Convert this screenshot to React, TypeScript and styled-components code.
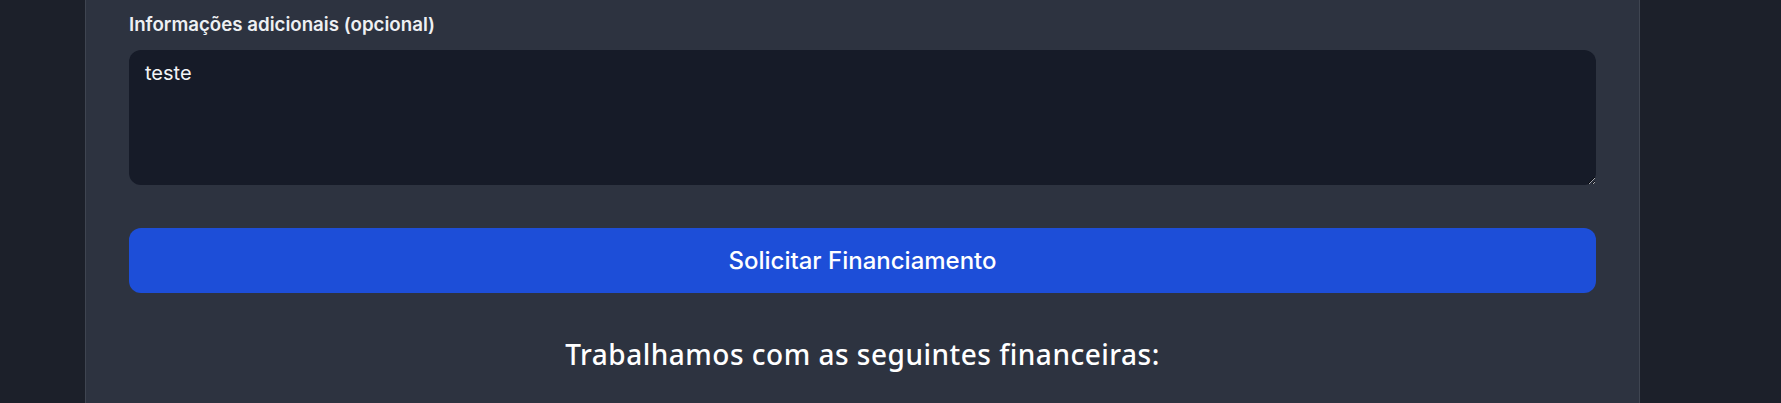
import React from "react";
import styled, { createGlobalStyle } from "styled-components";

const Global = createGlobalStyle`
  html, body {
    margin: 0;
    padding: 0;
    background: #1c202a;
    height: 100%;
    overflow: hidden;
  }
  #root { min-height: 100%; }
`;

const Page = styled.div`
  display: flex;
  min-height: 403px;
  padding-left: 85px;
  background: #1c202a;
`;

const Card = styled.section`
  width: 1555px;
  box-sizing: border-box;
  background: #2d3340;
  border-left: 1px solid #3f4551;
  border-right: 1px solid #3f4551;
  padding: 11px 43px 40px;
  display: flex;
  flex-direction: column;
`;

const Field = styled.div`
  display: flex;
  flex-direction: column;
  gap: 12px;
`;

const Label = styled.label`
  font-family: Inter, "Liberation Sans", sans-serif;
  font-size: 18.7px;
  line-height: 27px;
  font-weight: 600;
  color: #eef0f3;
`;

const TextArea = styled.textarea`
  box-sizing: border-box;
  width: 100%;
  height: 135px;
  margin: 0;
  background: #161b28;
  border: none;
  border-radius: 12px;
  padding: 11px 16px;
  font-family: Inter, "Liberation Sans", sans-serif;
  font-size: 20px;
  line-height: 24px;
  color: #f3f4f6;
  outline: none;
  display: block;
`;

const SubmitButton = styled.button`
  margin-top: 43px;
  height: 65px;
  width: 100%;
  border: none;
  border-radius: 12px;
  background: #1d4ed8;
  color: #ffffff;
  font-family: Inter, "Liberation Sans", sans-serif;
  font-size: 24px;
  font-weight: 500;
  cursor: pointer;
`;

const Title = styled.h2`
  margin: 43px 0 0;
  text-align: center;
  font-family: "Noto Sans", Lato, sans-serif;
  font-size: 28px;
  line-height: 36px;
  letter-spacing: 0.5px;
  font-weight: 500;
  color: #ffffff;
`;

export default function App() {
  return (
    <>
      <Global />
      <Page>
        <Card>
          <Field>
            <Label htmlFor="info">Informações adicionais (opcional)</Label>
            <TextArea id="info" defaultValue="teste" />
          </Field>
          <SubmitButton type="button">Solicitar Financiamento</SubmitButton>
          <Title>Trabalhamos com as seguintes financeiras:</Title>
        </Card>
      </Page>
    </>
  );
}
